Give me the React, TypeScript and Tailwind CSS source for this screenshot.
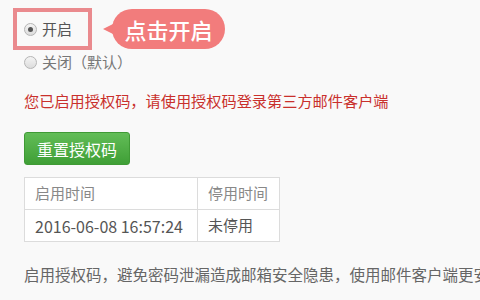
import React from "react";

const font = { fontFamily: '"Noto Sans CJK SC", "Noto Sans", sans-serif' };

function Radio({ checked }: { checked?: boolean }) {
  return (
    <span className="flex h-[13px] w-[13px] shrink-0 items-center justify-center rounded-full border border-[#b5b5b5] bg-gradient-to-b from-[#f4f4f4] to-[#dcdcdc]">
      {checked && <span className="h-[5px] w-[5px] rounded-full bg-[#555]" />}
    </span>
  );
}

export default function App() {
  return (
    <div
      className="h-[300px] w-[480px] overflow-hidden bg-[#f9f9f9] pl-6 text-[15px] text-[#555]"
      style={font}
    >
      {/* 开启 + callout */}
      <div className="mt-[8px] flex items-center">
        <div className="-ml-[11px] flex h-[42px] w-[79px] items-center gap-[5px] border-4 border-[#ea8a8e] pl-[7px]">
          <Radio checked />
          <span className="leading-5">开启</span>
        </div>
        <div className="ml-[11px] flex items-center">
          <span className="h-0 w-0 border-y-[5px] border-r-[10px] border-y-transparent border-r-[#f27c7c]" />
          <div className="-ml-px flex h-[40px] w-[113px] items-center justify-center rounded-full bg-[#f27c7c] text-[22px] font-medium text-white">
            点击开启
          </div>
        </div>
      </div>

      {/* 关闭 */}
      <div className="mt-[2px] flex h-[20px] items-center gap-[5px] text-[#777]">
        <Radio />
        <span className="leading-5">关闭（默认）</span>
      </div>

      <p className="mt-[18px] text-[15.2px] leading-5 text-[#c9302c]">
        您已启用授权码，请使用授权码登录第三方邮件客户端
      </p>

      <button className="mt-[22px] flex h-[33px] w-[106px] items-center justify-center rounded-[3px] border border-[#3f9a35] bg-gradient-to-b from-[#62bd57] to-[#3f9f36] text-[16px] text-white">
        重置授权码
      </button>

      <table className="mt-[12px] w-[256px] border-collapse bg-white">
        <tbody>
          <tr className="h-[32px] text-[#888]">
            <td className="w-[173px] border border-[#dcdcdc] pl-[10px]">启用时间</td>
            <td className="border border-[#dcdcdc] pl-[10px]">停用时间</td>
          </tr>
          <tr className="h-[32px] text-[#555]">
            <td className="border border-[#dcdcdc] pl-[10px] text-[16px]">2016-06-08 16:57:24</td>
            <td className="border border-[#dcdcdc] pl-[10px]">未停用</td>
          </tr>
        </tbody>
      </table>

      <p className="mt-[22px] whitespace-nowrap text-[15.5px] leading-5 text-[#666]">
        启用授权码，避免密码泄漏造成邮箱安全隐患，使用邮件客户端更安全
      </p>
    </div>
  );
}
